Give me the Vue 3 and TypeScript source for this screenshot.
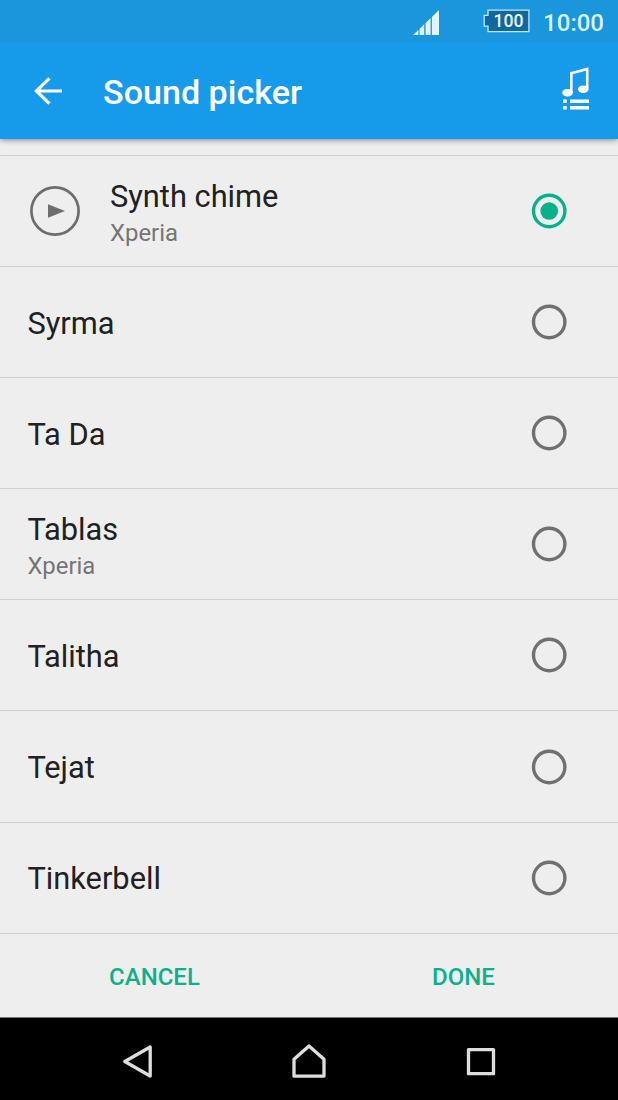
<script setup lang="ts">
import { ref } from 'vue'

interface Sound {
  name: string
  source?: string
}

const sounds: Sound[] = [
  { name: 'Synth chime', source: 'Xperia' },
  { name: 'Syrma' },
  { name: 'Ta Da' },
  { name: 'Tablas', source: 'Xperia' },
  { name: 'Talitha' },
  { name: 'Tejat' },
  { name: 'Tinkerbell' },
]

const selected = ref('Synth chime')
</script>

<template>
  <div class="screen">
    <div class="status">
      <svg class="signal" width="26" height="26" viewBox="0 0 26 26">
        <path d="M0 25L5.4 19.9V25ZM6.6 25V18.8L11.2 14.3V25ZM12.6 25V12.9L17.6 8.1V25ZM18.9 25V6.9L26 0V25Z" fill="#e2f5fd" />
      </svg>
      <div class="battery">
        <svg width="47" height="24" viewBox="0 0 47 24">
          <path d="M5 1.2H45.9V22.6H5V17.2H1.2V6.4H5Z" fill="#12679c" stroke="#b9e9fb" stroke-width="1.3" />
        </svg>
        <span class="level">100</span>
      </div>
      <span class="clock">10:00</span>
    </div>

    <header class="bar">
      <svg class="back" width="30" height="30" viewBox="0 0 30 30" fill="none" stroke="#fff" stroke-width="3.2">
        <path d="M29 15H3M16.4 2.4L3.4 15L16.4 27.6" />
      </svg>
      <h1>Sound picker</h1>
      <svg class="music" width="28" height="44" viewBox="0 0 28 44">
        <path d="M9.3 25.5V6.2L25.2 2V22" fill="none" stroke="#fff" stroke-width="2.6" />
        <ellipse cx="5.5" cy="25.7" rx="5.3" ry="3.8" fill="#fff" />
        <ellipse cx="21.2" cy="22.3" rx="5.3" ry="3.8" fill="#fff" />
        <path d="M1 32.5H4.7V36.1H1ZM8 32.5H27V36.1H8ZM1 38.9H4.7V42.5H1ZM8 38.9H27V42.5H8Z" fill="#fff" />
      </svg>
    </header>

    <main class="list">
      <div v-for="sound in sounds" :key="sound.name" class="row" @click="selected = sound.name">
        <svg v-if="sound.name === selected" class="play" width="50" height="50" viewBox="0 0 50 50">
          <circle cx="25" cy="25" r="23.6" fill="none" stroke="#6d6d6d" stroke-width="2.7" />
          <path d="M18 18.2L35 25L18 31.8Z" fill="#6d6d6d" />
        </svg>
        <div class="label">
          <span class="name">{{ sound.name }}</span>
          <span v-if="sound.source" class="source">{{ sound.source }}</span>
        </div>
        <svg class="radio" :class="{ on: sound.name === selected }" width="36" height="36" viewBox="0 0 36 36">
          <circle class="ring" cx="18.2" cy="18" r="15.7" />
          <circle v-if="sound.name === selected" class="dot" cx="18.2" cy="18" r="8.8" />
        </svg>
      </div>
    </main>

    <footer class="actions">
      <button type="button">CANCEL</button>
      <button type="button">DONE</button>
    </footer>

    <nav class="nav">
      <svg width="36" height="36" viewBox="0 0 36 36"><path d="M5.8 18.5L31.2 4V33Z" /></svg>
      <svg width="36" height="36" viewBox="0 0 36 36"><path d="M18 3L33 16.2V33.1H3V16.2Z" /></svg>
      <svg width="36" height="36" viewBox="0 0 36 36"><path d="M5.5 6.7H30.5V30.7H5.5Z" /></svg>
    </nav>
  </div>
</template>

<style>
body {
  margin: 0;
}
</style>

<style scoped>
.screen {
  width: 618px;
  height: 1100px;
  display: flex;
  flex-direction: column;
  overflow: hidden;
  background: #eee;
  font-family: Roboto, "Noto Sans", sans-serif;
}
.status {
  position: relative;
  z-index: 1;
  height: 43px;
  flex: none;
  display: flex;
  align-items: center;
  justify-content: flex-end;
  box-sizing: border-box;
  padding-right: 14px;
  background: #1a96dc;
}
.signal {
  margin: 2px 44px 0 0;
}
.battery {
  display: grid;
  margin: 0 13px 1px 0;
}
.battery > * {
  grid-area: 1 / 1;
}
.level {
  padding-left: 10.5px;
  font-size: 17.6px;
  font-weight: 500;
  line-height: 25px;
  color: #e9f8fe;
}
.clock {
  margin-top: 2px;
  font-size: 24px;
  font-weight: 500;
  line-height: 28px;
  color: #d8f3fd;
}
.bar {
  position: relative;
  height: 96px;
  flex: none;
  display: flex;
  align-items: center;
  box-sizing: border-box;
  padding: 0 28px 0 33px;
  background: #169bea;
  box-shadow: 0 1px 6px rgba(0, 0, 0, 0.45);
}
h1 {
  flex: 1;
  margin: 2px 0 0 40px;
  font-size: 34.1px;
  font-weight: 500;
  line-height: 40px;
  color: #fff;
}
.music {
  margin-bottom: 4px;
}
.list {
  padding-top: 16px;
}
.row {
  height: 111.1px;
  display: flex;
  align-items: center;
  box-sizing: border-box;
  padding: 0 51px 0 27.4px;
  border-top: 1px solid #d0d0d0;
}
.play {
  margin: 0 30px 0 2.6px;
}
.label {
  flex: 1;
  display: flex;
  flex-direction: column;
  padding-top: 3px;
}
.name {
  font-size: 30.8px;
  line-height: 36px;
  color: #212121;
}
.source {
  margin-top: 4px;
  font-size: 23.9px;
  line-height: 28px;
  color: #757575;
}
.ring {
  fill: none;
  stroke: #707070;
  stroke-width: 3.4;
}
.on .ring {
  stroke: #07b28b;
}
.dot {
  fill: #07b28b;
}
.actions {
  flex: 1;
  display: grid;
  grid-template-columns: 1fr 1fr;
  border-top: 1px solid #d0d0d0;
}
.actions button {
  border: 0;
  padding: 4px 0 0;
  background: none;
  font: 500 24px/28px Roboto, "Noto Sans", sans-serif;
  color: #0cb08c;
}
.nav {
  height: 83px;
  flex: none;
  display: flex;
  align-items: center;
  justify-content: center;
  gap: 136px;
  box-sizing: border-box;
  padding-top: 4px;
  border-top: 1px solid #777;
  background: #000;
}
.nav path {
  fill: none;
  stroke: #dedede;
  stroke-width: 3.3;
  stroke-linejoin: round;
}
</style>
